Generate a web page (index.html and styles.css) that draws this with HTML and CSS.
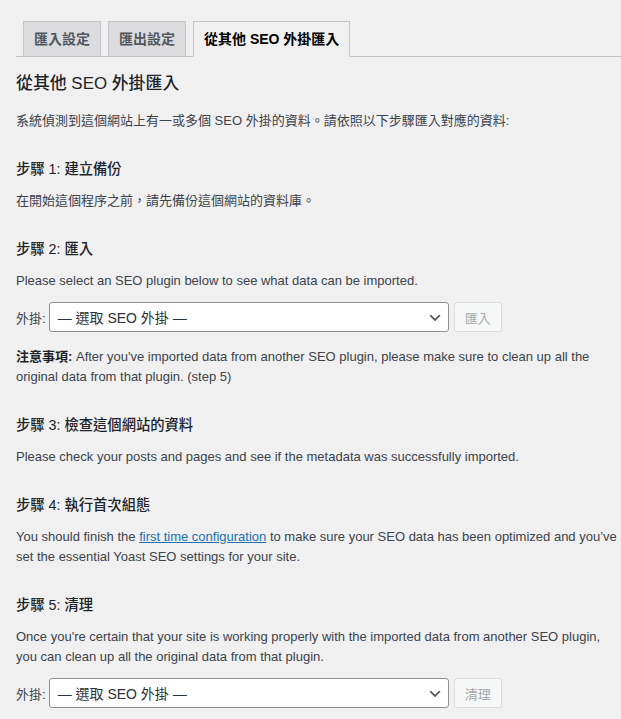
FILE: index.html
```html
<!DOCTYPE html>
<html lang="zh-Hant">
<head>
<meta charset="utf-8">
<link rel="stylesheet" href="styles.css">
</head>
<body>
<div class="wrap">
  <nav class="tabs">
    <a class="tab">匯入設定</a>
    <a class="tab">匯出設定</a>
    <a class="tab active">從其他 SEO 外掛匯入</a>
  </nav>
  <div class="content">
    <h2>從其他 SEO 外掛匯入</h2>
    <p>系統偵測到這個網站上有一或多個 SEO 外掛的資料。請依照以下步驟匯入對應的資料:</p>

    <h3>步驟 1: 建立備份</h3>
    <p>在開始這個程序之前，請先備份這個網站的資料庫。</p>

    <h3>步驟 2: 匯入</h3>
    <p>Please select an SEO plugin below to see what data can be imported.</p>
    <div class="form-row">
      <span class="label">外掛:</span>
      <div class="select">
        <span>— 選取 SEO 外掛 —</span>
        <svg class="chev" width="16" height="16" viewBox="0 0 20 20"><path d="M5 6l5 5 5-5 2 1-7 7-7-7 2-1z" fill="#50575e"/></svg>
      </div>
      <span class="button">匯入</span>
    </div>
    <p><strong>注意事項:</strong> After you've imported data from another SEO plugin, please make sure to clean up all the original data from that plugin. (step 5)</p>

    <h3>步驟 3: 檢查這個網站的資料</h3>
    <p>Please check your posts and pages and see if the metadata was successfully imported.</p>

    <h3>步驟 4: 執行首次組態</h3>
    <p>You should finish the <a class="link">first time configuration</a> to make sure your SEO data has been optimized and you’ve set the essential Yoast SEO settings for your site.</p>

    <h3>步驟 5: 清理</h3>
    <p>Once you're certain that your site is working properly with the imported data from another SEO plugin, you can clean up all the original data from that plugin.</p>
    <div class="form-row">
      <span class="label">外掛:</span>
      <div class="select">
        <span>— 選取 SEO 外掛 —</span>
        <svg class="chev" width="16" height="16" viewBox="0 0 20 20"><path d="M5 6l5 5 5-5 2 1-7 7-7-7 2-1z" fill="#50575e"/></svg>
      </div>
      <span class="button">清理</span>
    </div>
  </div>
</div>
</body>
</html>
```

FILE: styles.css
```css
html, body {
  margin: 0;
  padding: 0;
  background: #f0f0f1;
  overflow: hidden;
}
body {
  font-family: "Segoe UI", "Liberation Sans", "Noto Sans CJK TC", sans-serif;
  font-size: 13px;
  color: #3c434a;
}
.wrap {
  padding-top: 21px;
}
.tabs {
  display: flex;
  align-items: flex-start;
  margin-left: 16px;
  border-bottom: 1px solid #c3c4c7;
}
.tab {
  margin-left: 7px;
  border: 1px solid #c3c4c7;
  border-bottom: none;
  padding: 5px 10px;
  font-size: 14px;
  line-height: 24px;
  font-weight: 600;
  background: #dcdcde;
  color: #50575e;
}
.tab.active {
  background: #f0f0f1;
  color: #000;
  border-bottom: 1px solid #f0f0f1;
  margin-bottom: -1px;
}
.content {
  padding-left: 16px;
  width: 605px;
  display: flex;
  flex-direction: column;
}
.content > * {
  margin: 0;
}
h2 {
  font-size: 16.9px;
  line-height: 24px;
  font-weight: 500;
  color: #1d2327;
}
.content > h2 {
  margin-top: 15px;
}
.content > h2 + p {
  margin-top: 15px;
}
h3 {
  font-size: 14.3px;
  line-height: 19px;
  font-weight: 500;
  color: #1d2327;
}
.content > h3 {
  margin-top: 29px;
}
.content > h3 + p {
  margin-top: 12px;
}
p {
  line-height: 20px;
}
.content > .form-row {
  margin-top: 11px;
}
.content > .form-row + p {
  margin-top: 15px;
}
strong {
  font-weight: 600;
  color: #1d2327;
}
.link {
  color: #2271b1;
  text-decoration: underline;
}
.form-row {
  display: flex;
  align-items: center;
  height: 30px;
}
.label {
  margin-right: 3px;
}
.select {
  box-sizing: border-box;
  width: 400px;
  height: 30px;
  border: 1px solid #8c8f94;
  border-radius: 3px;
  background: #fff;
  display: flex;
  align-items: center;
  justify-content: space-between;
  padding: 0 5px 0 8px;
  font-size: 14px;
  color: #2c3338;
}
.chev {
  margin-top: 2px;
}
.button {
  box-sizing: border-box;
  margin-left: 5px;
  height: 30px;
  padding: 0 10px;
  border: 1px solid #dcdcde;
  border-radius: 3px;
  background: #f6f7f7;
  color: #a7aaad;
  display: flex;
  align-items: center;
}
```
